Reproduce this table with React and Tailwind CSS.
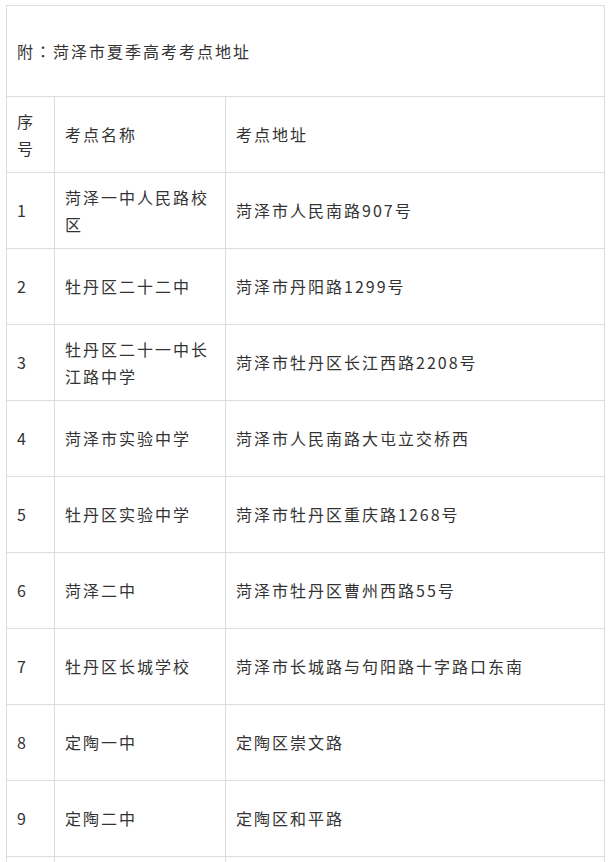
const rows = [
  ["1", "菏泽一中人民路校区", "菏泽市人民南路907号"],
  ["2", "牡丹区二十二中", "菏泽市丹阳路1299号"],
  ["3", "牡丹区二十一中长江路中学", "菏泽市牡丹区长江西路2208号"],
  ["4", "菏泽市实验中学", "菏泽市人民南路大屯立交桥西"],
  ["5", "牡丹区实验中学", "菏泽市牡丹区重庆路1268号"],
  ["6", "菏泽二中", "菏泽市牡丹区曹州西路55号"],
  ["7", "牡丹区长城学校", "菏泽市长城路与句阳路十字路口东南"],
  ["8", "定陶一中", "定陶区崇文路"],
  ["9", "定陶二中", "定陶区和平路"],
];

const cell = "border border-[#dddddd] px-[10px] align-middle";

export default function App() {
  return (
    <div
      className="bg-white h-[862px] overflow-hidden pl-[6px] pt-[5px] text-[#333333] text-[16px] leading-[27px] tracking-[2px]"
      style={{ fontFamily: '"Noto Sans CJK SC", "Noto Sans", sans-serif' }}
    >
      <table className="w-[598px] border-collapse table-fixed">
        <colgroup>
          <col className="w-[48px]" />
          <col className="w-[171px]" />
          <col className="w-[379px]" />
        </colgroup>
        <tbody>
          <tr className="h-[91px]">
            <td colSpan={3} className={cell}>
              附
              <span style={{ fontFamily: '"Noto Sans CJK TC", sans-serif' }}>：</span>
              菏泽市夏季高考考点地址
            </td>
          </tr>
          <tr className="h-[76px]">
            <td className={cell}>序号</td>
            <td className={cell}>考点名称</td>
            <td className={cell}>考点地址</td>
          </tr>
          {rows.map((r) => (
            <tr key={r[0]} className="h-[76px]">
              <td className={cell}>{r[0]}</td>
              <td className={cell}>{r[1]}</td>
              <td className={cell}>{r[2]}</td>
            </tr>
          ))}
          {/* 下一行只露出边框 */}
          <tr className="h-[76px]">
            <td className={cell}></td>
            <td className={cell}></td>
            <td className={cell}></td>
          </tr>
        </tbody>
      </table>
    </div>
  );
}
